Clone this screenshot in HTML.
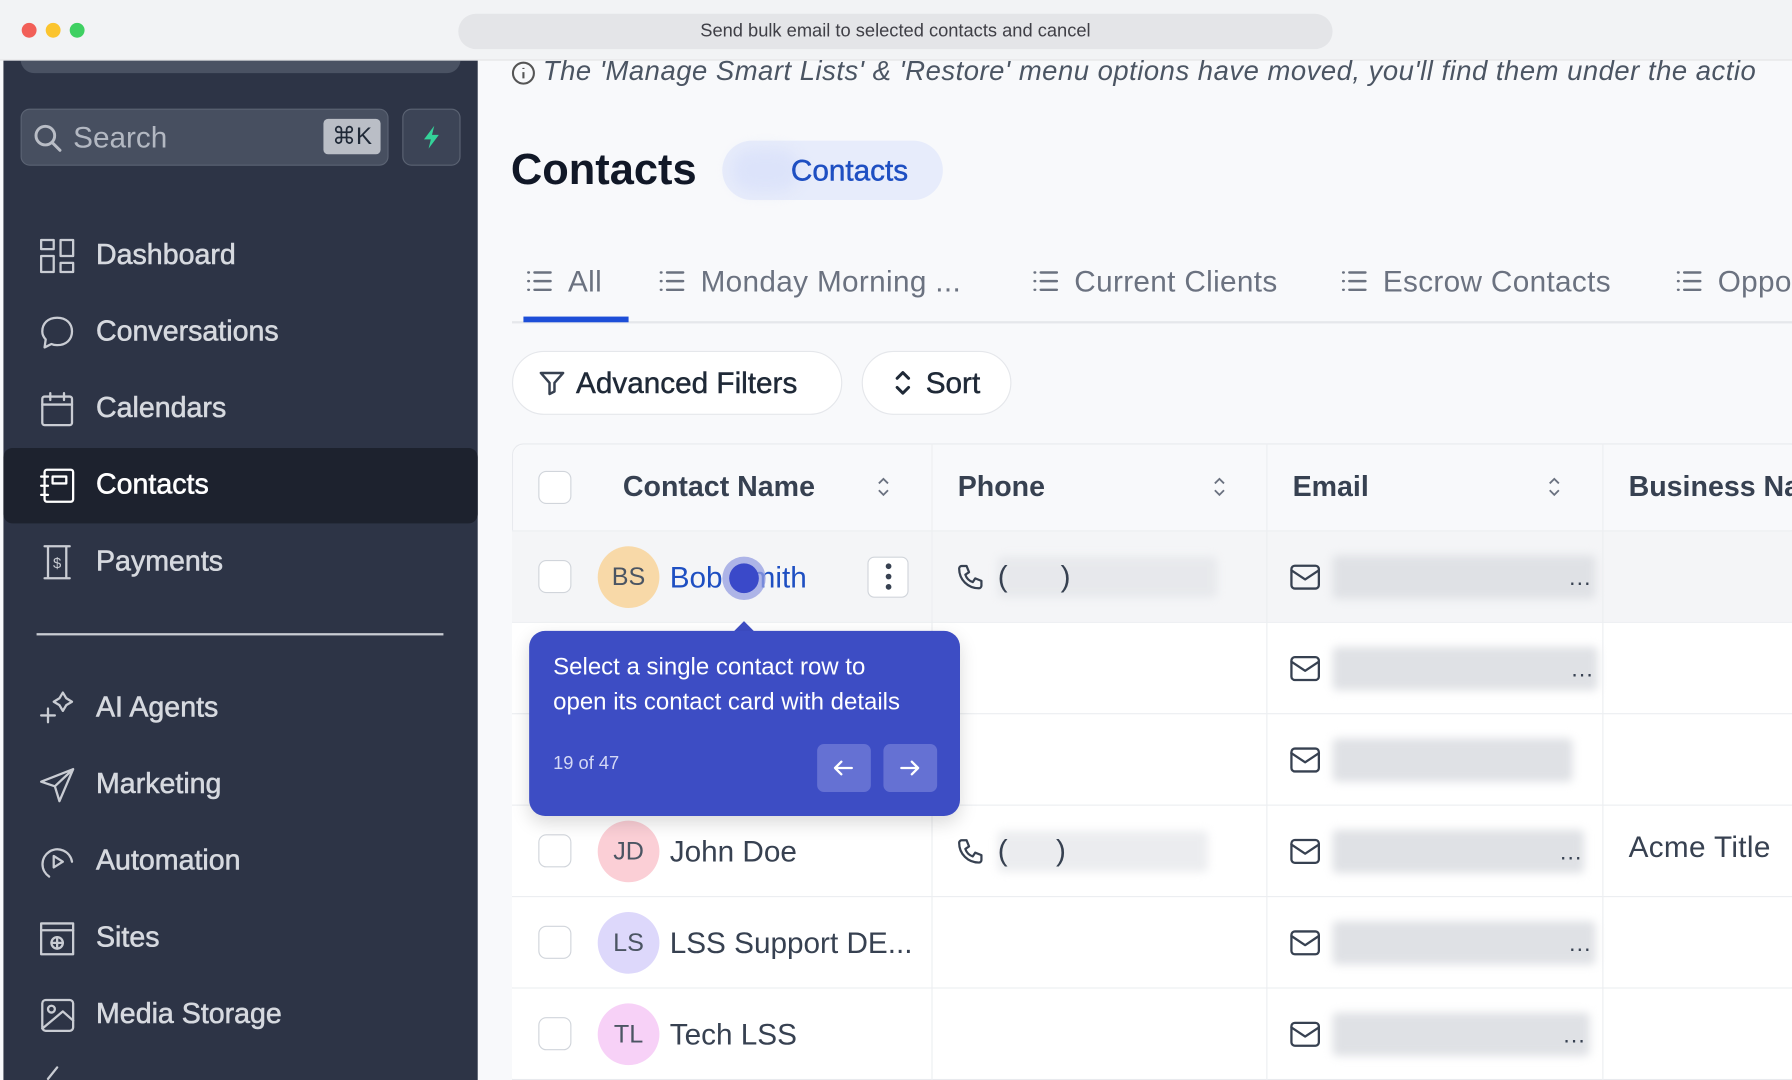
<!DOCTYPE html>
<html><head><meta charset="utf-8"><style>
*{box-sizing:border-box;margin:0;padding:0}
html,body{width:1792px;height:1080px;overflow:hidden;background:#fff;font-family:"Liberation Sans",sans-serif}
#s{position:absolute;left:0;top:0;width:1568px;height:945px;transform:scale(1.142857);transform-origin:0 0;background:#f8f9fb;overflow:hidden}
.a{position:absolute}
.nav{position:absolute;left:84px;font-size:25px;color:#d6d9df;line-height:30px;-webkit-text-stroke:0.5px #d6d9df}
.ic{position:absolute;left:33px;width:34px;height:34px}
.ic svg{width:34px;height:34px;fill:none;stroke:#c9ccd3;stroke-width:2;stroke-linecap:round;stroke-linejoin:round}
.tab{position:absolute;top:230px;font-size:26px;color:#6b7280;line-height:32px;white-space:nowrap;letter-spacing:0.3px}
.tab svg{width:26px;height:26px;vertical-align:-4px;margin-right:12px;fill:none;stroke:#6b7280;stroke-width:2;stroke-linecap:round}
.row{position:absolute;left:448px;right:0;height:80px;border-top:1px solid #eceef1;background:#fff}
.cb{position:absolute;left:23px;top:25px;width:29px;height:29px;border:1.5px solid #d1d5db;border-radius:7px;background:#fff}
.av{position:absolute;left:75px;top:13px;width:54px;height:54px;border-radius:50%;font-size:22px;color:#4b5563;text-align:center;line-height:54px}
.nm{position:absolute;left:138px;top:24px;font-size:26px;color:#374151;line-height:32px;white-space:nowrap}
.blur{position:absolute;background:#dfe1e5;filter:blur(4px);border-radius:4px}
.mail{position:absolute;left:680px;top:28px;width:28px;height:24px}
.mail svg{width:100%;height:100%;fill:none;stroke:#374151;stroke-width:2;stroke-linejoin:round;stroke-linecap:round}
.dots{position:absolute;font-size:20px;color:#374151;letter-spacing:1px}
.vl{position:absolute;top:388px;bottom:0;width:1px;background:#eceef1}
.sb{-webkit-text-stroke:0.4px currentColor}
</style></head><body><div id="s">
<!-- sidebar -->
<div class="a" style="left:3px;top:53px;width:415px;height:892px;background:#2d3446"></div>
<div class="a" style="left:18px;top:40px;width:385px;height:24px;background:#4a5263;border-radius:12px"></div>
<!-- title bar -->
<div class="a" style="left:0;top:0;width:1568px;height:53px;background:#f2f3f5;border-bottom:1px solid #e3e4e6"></div>
<div class="a" style="left:19px;top:20px;width:13px;height:13px;border-radius:50%;background:#f25f58"></div>
<div class="a" style="left:40px;top:20px;width:13px;height:13px;border-radius:50%;background:#fbc42e"></div>
<div class="a" style="left:61px;top:20px;width:13px;height:13px;border-radius:50%;background:#3fd062"></div>
<div class="a" style="left:401px;top:12px;width:765px;height:31px;border-radius:16px;background:#e4e5e8;font-size:16px;color:#3f3f46;text-align:center;line-height:31px">Send bulk email to selected contacts and cancel</div>
<div class="a" style="left:18px;top:95px;width:322px;height:50px;background:#474f60;border:1.5px solid #5b6373;border-radius:8px"></div>
<svg class="a" style="left:28px;top:107px" width="28" height="28" viewBox="0 0 24 24" fill="none" stroke="#b9bdc6" stroke-width="2.2" stroke-linecap="round"><circle cx="10" cy="10" r="7"/><path d="M15 15l6 6"/></svg>
<div class="a" style="left:64px;top:104px;font-size:26px;color:#b3b8c2;line-height:32px">Search</div>
<div class="a" style="left:283px;top:104px;width:50px;height:31px;background:#babec6;border-radius:4px;font-size:21px;color:#1f2937;text-align:center;line-height:31px">⌘K</div>
<div class="a" style="left:352px;top:95px;width:51px;height:50px;background:#3c4456;border:1.5px solid #5b6373;border-radius:8px"></div>
<svg class="a" style="left:366px;top:108px" width="24" height="24" viewBox="0 0 24 24"><path d="M14 2L5 14h6l-2 8 9-12h-6z" fill="#34d399"/></svg>
<div class="a" style="left:3px;top:392px;width:415px;height:66px;background:#1d222e;border-radius:8px"></div>
<div class="ic" style="top:207px"><svg viewBox="0 0 34 34"><rect x="3" y="3" width="11" height="8"/><rect x="20" y="3" width="11" height="14"/><rect x="3" y="17" width="11" height="14"/><rect x="20" y="23" width="11" height="8"/></svg></div>
<div class="nav" style="top:208px">Dashboard</div>
<div class="ic" style="top:274px"><svg viewBox="0 0 34 34"><path d="M17 4C9 4 4 9 4 16c0 3 1 5 3 7l-1 7 6-3c2 1 3 1 5 1 8 0 13-5 13-12S25 4 17 4z"/></svg></div>
<div class="nav" style="top:275px">Conversations</div>
<div class="ic" style="top:341px"><svg viewBox="0 0 34 34"><rect x="4" y="6" width="26" height="25" rx="2"/><path d="M4 13h26M11 3v6M23 3v6"/></svg></div>
<div class="nav" style="top:342px">Calendars</div>
<div class="ic" style="top:408px"><svg viewBox="0 0 34 34" style="stroke:#fff"><rect x="6" y="3" width="25" height="28" rx="2"/><path d="M3 9h6M3 17h6M3 25h6M13 9h12v6H13z"/></svg></div>
<div class="nav" style="top:409px;color:#fff;-webkit-text-stroke:0.5px #fff">Contacts</div>
<div class="ic" style="top:475px"><svg viewBox="0 0 34 34"><path d="M6 3h22M6 31h22M9 3v28M25 3v28"/><text x="17" y="22" font-size="13" fill="#c9ccd3" stroke="none" text-anchor="middle" font-family="Liberation Sans">$</text></svg></div>
<div class="nav" style="top:476px">Payments</div>
<div class="a" style="left:32px;top:554px;width:356px;height:2px;background:#c9ccd3"></div>
<div class="ic" style="top:603px"><svg viewBox="0 0 34 34"><path d="M22 3l3 5 5 3-5 3-3 5-3-5-5-3 5-3zM9 17v12M3 23h12"/></svg></div>
<div class="nav" style="top:604px">AI Agents</div>
<div class="ic" style="top:670px"><svg viewBox="0 0 34 34"><path d="M31 3L3 14l12 4 4 13zM15 18l16-15"/></svg></div>
<div class="nav" style="top:671px">Marketing</div>
<div class="ic" style="top:737px"><svg viewBox="0 0 34 34"><path d="M10 30A13 13 0 1 1 30 17"/><path d="M14 12l8 5-8 5z"/></svg></div>
<div class="nav" style="top:738px">Automation</div>
<div class="ic" style="top:804px"><svg viewBox="0 0 34 34"><rect x="3" y="4" width="28" height="27"/><path d="M3 10h28"/><circle cx="17" cy="21" r="5"/><path d="M12 21h10M17 16v10"/></svg></div>
<div class="nav" style="top:805px">Sites</div>
<div class="ic" style="top:871px"><svg viewBox="0 0 34 34"><rect x="4" y="4" width="27" height="27" rx="3"/><circle cx="12" cy="12" r="3"/><path d="M4 29l18-15 9 8"/></svg></div>
<div class="nav" style="top:872px">Media Storage</div>
<div class="ic" style="top:930px"><svg viewBox="0 0 34 34"><path d="M17 4l-8 10"/></svg></div>
<!-- main -->
<svg class="a" style="left:447px;top:53px" width="22" height="22" viewBox="0 0 24 24" fill="none" stroke="#555" stroke-width="2"><circle cx="12" cy="12" r="10"/><path d="M12 11v6M12 7v1"/></svg>
<div class="a" style="left:475px;top:48px;font-size:24px;font-style:italic;color:#4b5563;white-space:nowrap;line-height:30px;letter-spacing:0.45px">The 'Manage Smart Lists' &amp; 'Restore' menu options have moved, you'll find them under the actio</div>
<div class="a" style="left:447px;top:126px;font-size:38px;font-weight:bold;color:#111827;line-height:46px">Contacts</div>
<div class="a" style="left:632px;top:123px;width:193px;height:52px;border-radius:26px;background:#e7ecfb"></div>
<div class="a" style="left:640px;top:130px;width:60px;height:38px;border-radius:20px;background:#dce3fa;filter:blur(6px)"></div>
<div class="a sb" style="left:692px;top:133px;font-size:26px;color:#1e4fc2;line-height:32px">Contacts</div>
<div class="tab" style="left:459px"><svg viewBox="0 0 24 24"><path d="M8 5h13M8 12h13M8 19h13M3 5h.5M3 12h.5M3 19h.5"/></svg>All</div>
<div class="tab" style="left:575px"><svg viewBox="0 0 24 24"><path d="M8 5h13M8 12h13M8 19h13M3 5h.5M3 12h.5M3 19h.5"/></svg>Monday Morning ...</div>
<div class="tab" style="left:902px"><svg viewBox="0 0 24 24"><path d="M8 5h13M8 12h13M8 19h13M3 5h.5M3 12h.5M3 19h.5"/></svg>Current Clients</div>
<div class="tab" style="left:1172px"><svg viewBox="0 0 24 24"><path d="M8 5h13M8 12h13M8 19h13M3 5h.5M3 12h.5M3 19h.5"/></svg>Escrow Contacts</div>
<div class="tab" style="left:1465px"><svg viewBox="0 0 24 24"><path d="M8 5h13M8 12h13M8 19h13M3 5h.5M3 12h.5M3 19h.5"/></svg>Oppo</div>
<div class="a" style="left:448px;top:281px;width:1120px;height:2px;background:#e5e7eb"></div>
<div class="a" style="left:458px;top:277px;width:92px;height:5px;background:#1d4ed8"></div>
<div class="a" style="left:448px;top:307px;width:289px;height:56px;border-radius:28px;background:#fff;border:1.5px solid #e5e7eb"></div>
<svg class="a" style="left:470px;top:322px" width="26" height="26" viewBox="0 0 24 24" fill="none" stroke="#374151" stroke-width="2" stroke-linejoin="round"><path d="M3 4h18l-7 8v7l-4 2v-9z"/></svg>
<div class="a sb" style="left:504px;top:319px;font-size:26px;color:#1f2937;line-height:32px">Advanced Filters</div>
<div class="a" style="left:754px;top:307px;width:131px;height:56px;border-radius:28px;background:#fff;border:1.5px solid #e5e7eb"></div>
<svg class="a" style="left:779px;top:322px" width="22" height="26" viewBox="0 0 22 26" fill="none" stroke="#1f2937" stroke-width="2.6" stroke-linecap="round" stroke-linejoin="round"><path d="M6 9l5-5 5 5M6 17l5 5 5-5"/></svg>
<div class="a sb" style="left:810px;top:319px;font-size:26px;color:#1f2937;line-height:32px">Sort</div>
<!-- table -->
<div class="a" style="left:448px;top:388px;width:1120px;height:557px;background:#fff;border:1px solid #e8eaee;border-radius:10px 0 0 0"></div>
<div class="a" style="left:449px;top:389px;width:1119px;height:75px;background:#f8f9fb;border-radius:10px 0 0 0"></div>
<div class="cb" style="left:471px;top:412px;position:absolute"></div>
<div class="a" style="left:545px;top:410px;font-size:25px;font-weight:bold;color:#374151;line-height:32px">Contact Name</div>
<div class="a" style="left:838px;top:410px;font-size:25px;font-weight:bold;color:#374151;line-height:32px">Phone</div>
<div class="a" style="left:1131px;top:410px;font-size:25px;font-weight:bold;color:#374151;line-height:32px">Email</div>
<div class="a" style="left:1425px;top:410px;font-size:25px;font-weight:bold;color:#374151;line-height:32px;white-space:nowrap">Business Na</div>
<svg class="a" style="left:766px;top:416px" width="14" height="20" viewBox="0 0 14 20" fill="none" stroke="#6b7280" stroke-width="1.6"><path d="M3 7l4-4 4 4M3 13l4 4 4-4"/></svg>
<svg class="a" style="left:1060px;top:416px" width="14" height="20" viewBox="0 0 14 20" fill="none" stroke="#6b7280" stroke-width="1.6"><path d="M3 7l4-4 4 4M3 13l4 4 4-4"/></svg>
<svg class="a" style="left:1353px;top:416px" width="14" height="20" viewBox="0 0 14 20" fill="none" stroke="#6b7280" stroke-width="1.6"><path d="M3 7l4-4 4 4M3 13l4 4 4-4"/></svg>

<div class="row" style="top:464px;background:#f4f5f7">
 <div class="cb"></div><div class="av" style="background:#f8d9a8">BS</div>
 <div class="nm" style="color:#1e4fc2">Bob Smith</div>
 <div class="a" style="left:311px;top:22px;width:36px;height:36px;border:1.5px solid #d1d5db;border-radius:6px;background:#fff"></div>
 <div class="a" style="left:327px;top:28px;width:5px;height:5px;border-radius:50%;background:#374151;box-shadow:0 9px 0 #374151,0 18px 0 #374151"></div>
 <svg class="a" style="left:388px;top:27px" width="26" height="26" viewBox="0 0 24 24" fill="none" stroke="#374151" stroke-width="1.8" stroke-linejoin="round"><path d="M5 3h4l2 5-3 2c1 3 3 5 6 6l2-3 5 2v4c0 1-1 2-2 2C10 21 3 14 3 5c0-1 1-2 2-2z"/></svg>
 <div class="blur" style="left:425px;top:22px;width:192px;height:36px;opacity:.6"></div>
 <div class="a" style="left:425px;top:24px;font-size:26px;color:#374151">(</div><div class="a" style="left:480px;top:24px;font-size:26px;color:#374151">)</div>
 <div class="mail"><svg viewBox="0 0 28 24"><rect x="2" y="2" width="24" height="20" rx="3"/><path d="M2 6l12 8 12-8"/></svg></div>
 <div class="blur" style="left:718px;top:21px;width:230px;height:38px"></div>
 <div class="dots" style="left:925px;top:30px">...</div>
</div>
<div class="row" style="top:544px">
 <div class="mail"><svg viewBox="0 0 28 24"><rect x="2" y="2" width="24" height="20" rx="3"/><path d="M2 6l12 8 12-8"/></svg></div>
 <div class="blur" style="left:718px;top:21px;width:232px;height:38px"></div><div class="dots" style="left:927px;top:30px">...</div>
</div>
<div class="row" style="top:624px">
 <div class="mail"><svg viewBox="0 0 28 24"><rect x="2" y="2" width="24" height="20" rx="3"/><path d="M2 6l12 8 12-8"/></svg></div>
 <div class="blur" style="left:718px;top:21px;width:210px;height:38px"></div>
</div>
<div class="row" style="top:704px">
 <div class="cb"></div><div class="av" style="background:#fbcfd6">JD</div><div class="nm">John Doe</div>
 <svg class="a" style="left:388px;top:27px" width="26" height="26" viewBox="0 0 24 24" fill="none" stroke="#374151" stroke-width="1.8" stroke-linejoin="round"><path d="M5 3h4l2 5-3 2c1 3 3 5 6 6l2-3 5 2v4c0 1-1 2-2 2C10 21 3 14 3 5c0-1 1-2 2-2z"/></svg>
 <div class="blur" style="left:425px;top:22px;width:184px;height:36px;opacity:.6"></div>
 <div class="a" style="left:425px;top:24px;font-size:26px;color:#374151">(</div><div class="a" style="left:476px;top:24px;font-size:26px;color:#374151">)</div>
 <div class="mail"><svg viewBox="0 0 28 24"><rect x="2" y="2" width="24" height="20" rx="3"/><path d="M2 6l12 8 12-8"/></svg></div>
 <div class="blur" style="left:718px;top:21px;width:220px;height:38px"></div><div class="dots" style="left:917px;top:30px">...</div>
 <div class="a" style="left:977px;top:21px;font-size:26px;color:#374151;white-space:nowrap;letter-spacing:0.3px">Acme Title</div>
</div>
<div class="row" style="top:784px">
 <div class="cb"></div><div class="av" style="background:#ddd8fb">LS</div><div class="nm">LSS Support DE...</div>
 <div class="mail"><svg viewBox="0 0 28 24"><rect x="2" y="2" width="24" height="20" rx="3"/><path d="M2 6l12 8 12-8"/></svg></div>
 <div class="blur" style="left:718px;top:21px;width:230px;height:38px"></div><div class="dots" style="left:925px;top:30px">...</div>
</div>
<div class="row" style="top:864px">
 <div class="cb"></div><div class="av" style="background:#f7d1f7">TL</div><div class="nm">Tech LSS</div>
 <div class="mail"><svg viewBox="0 0 28 24"><rect x="2" y="2" width="24" height="20" rx="3"/><path d="M2 6l12 8 12-8"/></svg></div>
 <div class="blur" style="left:718px;top:21px;width:225px;height:38px"></div><div class="dots" style="left:920px;top:30px">...</div>
</div>
<div class="vl" style="left:815px"></div><div class="vl" style="left:1108px"></div><div class="vl" style="left:1402px"></div>
<!-- tooltip -->
<div class="a" style="left:632px;top:487px;width:38px;height:38px;border-radius:50%;background:rgba(150,158,225,.75)"></div>
<div class="a" style="left:638px;top:493px;width:26px;height:26px;border-radius:50%;background:#3a49c9"></div>
<div class="a" style="left:645px;top:546px;width:12px;height:12px;background:#3d4dc4;transform:rotate(45deg)"></div>
<div class="a" style="left:463px;top:552px;width:377px;height:162px;background:#3d4dc4;border-radius:14px;box-shadow:0 6px 16px rgba(0,0,0,.15)"></div>
<div class="a" style="left:484px;top:568px;font-size:21px;color:#fff;line-height:31px">Select a single contact row to<br>open its contact card with details</div>
<div class="a" style="left:484px;top:660px;font-size:16px;color:#d4d8f5">19 of 47</div>
<div class="a" style="left:715px;top:651px;width:47px;height:42px;background:#6571d3;border-radius:6px"></div>
<div class="a" style="left:773px;top:651px;width:47px;height:42px;background:#6571d3;border-radius:6px"></div>
<svg class="a" style="left:727px;top:661px" width="22" height="22" viewBox="0 0 24 24" fill="none" stroke="#fff" stroke-width="2.2" stroke-linecap="round" stroke-linejoin="round"><path d="M20 12H4M10 6l-6 6 6 6"/></svg>
<svg class="a" style="left:785px;top:661px" width="22" height="22" viewBox="0 0 24 24" fill="none" stroke="#fff" stroke-width="2.2" stroke-linecap="round" stroke-linejoin="round"><path d="M4 12h16M14 6l6 6-6 6"/></svg>
</div></body></html>
